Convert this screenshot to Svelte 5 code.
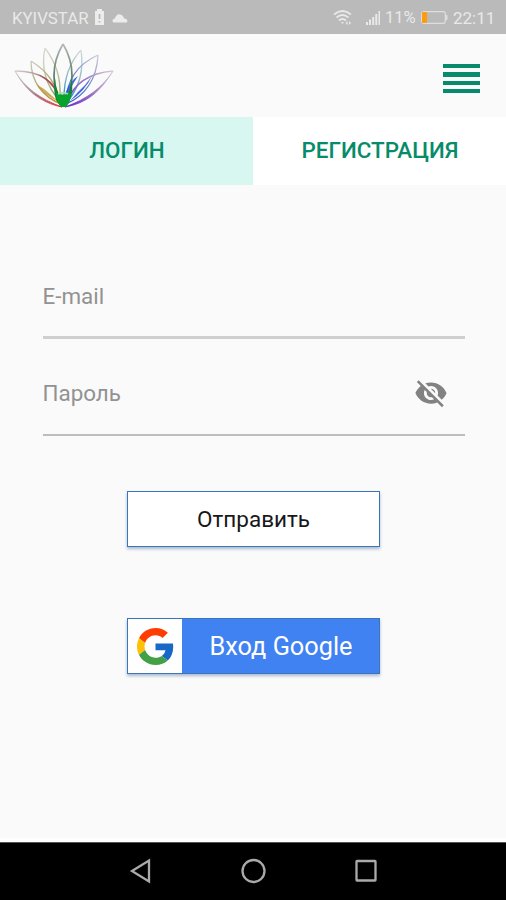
<script>
  let email = $state('');
  let password = $state('');
</script>

<div class="screen">
  <div class="status">
    <span class="carrier">KYIVSTAR</span>
    <svg class="sim" width="11" height="17" viewBox="0 0 11 17">
      <path d="M3 2V0h5v2h2v14H1V2Z" fill="#ececec" />
      <path d="M5.500 5v5M5.500 12v1.500" stroke="#bababa" stroke-width="1.800" />
    </svg>
    <svg class="cloud" width="16" height="10" viewBox="0 0 16 10">
      <path d="M2 9.500C-.5 9.500 .4 5.500 3 5.600C3.500 2 7 0 10 2.200C11.300 3.200 11.800 4.700 12 5.400C15.500 5.500 16.300 8.500 14.500 9.500Z" fill="#ececec" />
    </svg>
    <span class="gap"></span>
    <svg class="wifi" width="20" height="17" viewBox="0 0 20 17" fill="none" stroke="#e9e9e9" stroke-width="1.700">
      <path d="M1 5.500Q9.500-1.500 18 5.500M3.500 8.500Q9.500 3.500 15.500 8.500M6 11.500Q9.500 8.500 13 11.500" />
      <path d="M8 13h3l-1.500 2zM12.500 14l2-2v4zM16 12v4l2-2z" fill="#e9e9e9" stroke="none" />
    </svg>
    <svg class="signal" width="15" height="14" viewBox="0 0 15 14" fill="#e9e9e9">
      <path d="M0 11h2v3H0zM3 8.500h2V14H3zM6.200 6h2v8h-2zM9.300 3h2v11h-2zM12.500 0h1.500v14h-1.500z" />
    </svg>
    <span class="percent">11%</span>
    <svg class="battery" width="28" height="13" viewBox="0 0 28 13">
      <rect x=".7" y=".7" width="23.600" height="11.600" rx="2" fill="none" stroke="#dedede" stroke-width="1.200" />
      <path d="M25.500 4v5" stroke="#dedede" stroke-width="2" />
      <rect x="1" y="1" width="5" height="11" rx="1" fill="#ff9c0b" />
    </svg>
    <span class="clock">22:11</span>
  </div>

  <header>
    <svg class="logo" width="102" height="68" viewBox="0 0 102 68" fill="none" stroke-width="1.300">
      <defs>
        <linearGradient id="rose" gradientUnits="userSpaceOnUse" x1="2" y1="29" x2="48" y2="62">
          <stop offset="0" stop-color="#d2cfcf" /><stop offset=".5" stop-color="#a5848a" /><stop offset="1" stop-color="#e02f3c" />
        </linearGradient>
        <linearGradient id="gold" gradientUnits="userSpaceOnUse" x1="18" y1="10" x2="46" y2="60">
          <stop offset="0" stop-color="#d8d9cf" /><stop offset=".5" stop-color="#b0aa80" /><stop offset="1" stop-color="#c98a20" />
        </linearGradient>
        <linearGradient id="olive" gradientUnits="userSpaceOnUse" x1="32" y1="6" x2="48" y2="58">
          <stop offset="0" stop-color="#dadbd6" /><stop offset=".5" stop-color="#c0bf9c" /><stop offset="1" stop-color="#7ba238" />
        </linearGradient>
        <linearGradient id="teal" gradientUnits="userSpaceOnUse" x1="68" y1="8" x2="52" y2="60">
          <stop offset="0" stop-color="#d5dada" /><stop offset=".5" stop-color="#8ebac8" /><stop offset="1" stop-color="#1583c4" />
        </linearGradient>
        <linearGradient id="blue" gradientUnits="userSpaceOnUse" x1="85" y1="13" x2="52" y2="62">
          <stop offset="0" stop-color="#cccfda" /><stop offset=".5" stop-color="#7385c4" /><stop offset="1" stop-color="#164ae0" />
        </linearGradient>
        <linearGradient id="violet" gradientUnits="userSpaceOnUse" x1="100" y1="29" x2="52" y2="62">
          <stop offset="0" stop-color="#d3ccd8" /><stop offset=".5" stop-color="#9a74c0" /><stop offset="1" stop-color="#6d20d4" />
        </linearGradient>
        <linearGradient id="green" gradientUnits="userSpaceOnUse" x1="50" y1="2" x2="50" y2="63">
          <stop offset="0" stop-color="#b5bab5" /><stop offset=".5" stop-color="#5d7d6c" /><stop offset="1" stop-color="#079b2f" />
        </linearGradient>
      </defs>
      <path stroke="url(#olive)" d="M32 6C28 24 32 44 48 60M32 6C43 21 48 35 47 56" />
      <path stroke="url(#teal)" d="M68 8C57 20 51 36 51 56M68 8C71 28 67 45 54 60" />
      <path stroke="url(#gold)" d="M18 19C18 40 30 55 48 62M18 19C34 29 43 41 47 60" />
      <path stroke="url(#blue)" d="M85 13C63 23 55 38 52 60M85 13C84 37 72 54 53 62" />
      <path stroke="url(#rose)" d="M2 29C24 29 43 37 48 61" />
      <path stroke="url(#violet)" d="M100 29C76 31 61 41 54 60" />
      <path fill="url(#rose)" d="M2 29C12 48 28 61 49 65C27 57 12 46 2 29Z" stroke="url(#rose)" stroke-width=".8" />
      <path fill="url(#violet)" d="M100 29C87 50 74 61 52 65C74 57 89 46 100 29Z" stroke="url(#violet)" stroke-width=".8" />
      <path fill="#a53f43" fill-opacity=".75" d="M24 32Q40 37 45 53Q37 39 24 32Z" />
      <path fill="#bd8d25" fill-opacity=".75" d="M23 42Q31 53 46 60Q37 52 31 47Z" />
      <path fill="#214fd8" fill-opacity=".85" d="M79 34Q72 49 57 59L65 50Q73 43 79 34ZM53 50Q58 38 65 34Q57 46 53 57Z" />
      <path stroke="url(#green)" stroke-width="1.700" d="M50 2C38 22 38 46 50 63C62 46 62 22 50 2" />
      <path d="M42 36Q43 48 47 54H54Q58 47 58 36Q61 47 57 58L52 65H48L43 58Q40 48 42 36Z" fill="#14813d" />
      <path d="M43 51Q50 54 58 51Q58 60 53 65H48Q43 60 43 51Z" fill="#07a32b" />
      <path d="M45 52Q50 49.500 55 52" stroke="#a2dcb1" stroke-width="1.500" />
    </svg>
    <div class="menu"><i></i><i></i><i></i><i></i></div>
  </header>

  <nav class="tabs">
    <div class="tab active"><span>ЛОГИН</span></div>
    <div class="tab"><span>РЕГИСТРАЦИЯ</span></div>
  </nav>

  <main>
    <label class="field"><input type="text" placeholder="E-mail" bind:value={email} /></label>
    <label class="field second">
      <input type="password" placeholder="Пароль" bind:value={password} />
      <svg class="eye" width="34" height="34" viewBox="0 0 24 24" fill="#828282">
        <path d="M12 7c2.760 0 5 2.240 5 5 0 .65-.13 1.260-.36 1.830l2.920 2.920c1.510-1.260 2.700-2.890 3.430-4.750-1.730-4.390-6-7.500-11-7.500-1.400 0-2.740.25-3.980.7l2.160 2.160C10.740 7.130 11.350 7 12 7zM2 4.270l2.280 2.280.46.46C3.080 8.300 1.780 10.020 1 12c1.730 4.390 6 7.500 11 7.500 1.550 0 3.030-.3 4.380-.84l.42.42L19.730 22 21 20.730 3.270 3 2 4.270zM7.530 9.800l1.550 1.550c-.05.21-.08.43-.08.65 0 1.660 1.340 3 3 3 .22 0 .44-.03.65-.08l1.550 1.550c-.67.33-1.410.53-2.200.53-2.760 0-5-2.240-5-5 0-.79.2-1.530.53-2.200zm4.310-.78l3.150 3.150.02-.16c0-1.660-1.340-3-3-3l-.17.01z" />
      </svg>
    </label>

    <button class="send"><span>Отправить</span></button>
    <button class="google">
      <span class="mark">
        <svg width="37" height="37" viewBox="0 0 48 48">
          <path fill="#ff3d00" d="M24 9.500c3.540 0 6.710 1.220 9.210 3.600l6.850-6.850C35.900 2.380 30.470 0 24 0 14.620 0 6.510 5.380 2.560 13.220l7.980 6.190C12.430 13.720 17.740 9.500 24 9.500z" />
          <path fill="#1769c7" d="M46.980 24.550c0-1.570-.15-3.090-.38-4.550H24v9.020h12.940c-.58 2.960-2.260 5.480-4.780 7.180l7.730 6c4.510-4.180 7.090-10.360 7.090-17.650z" />
          <path fill="#ffc107" d="M10.530 28.590c-.48-1.450-.76-2.990-.76-4.590s.27-3.140.76-4.590l-7.980-6.190C.92 16.460 0 20.120 0 24c0 3.880.92 7.540 2.560 10.780l7.970-6.190z" />
          <path fill="#43a047" d="M24 48c6.480 0 11.930-2.130 15.890-5.810l-7.730-6c-2.150 1.450-4.920 2.300-8.160 2.300-6.260 0-11.570-4.220-13.470-9.910l-7.980 6.190C6.510 42.620 14.620 48 24 48z" />
        </svg>
      </span>
      <span class="caption">Вход Google</span>
    </button>
  </main>

  <footer>
    <svg width="24" height="26" viewBox="0 0 24 26"><path d="M3 13 20 2.500v21Z" /></svg>
    <svg width="26" height="26" viewBox="0 0 26 26"><circle cx="12.500" cy="13" r="11" /></svg>
    <svg width="24" height="26" viewBox="0 0 24 26"><rect x="2.500" y="3" width="19" height="19.500" rx=".5" /></svg>
  </footer>
</div>

<style>
  .screen {
    width: 506px;
    height: 900px;
    display: flex;
    flex-direction: column;
    background: #fafafa;
    font-family: Roboto, "Noto Sans", sans-serif;
    overflow: hidden;
  }
  .status {
    box-sizing: border-box;
    height: 34px;
    flex: none;
    display: flex;
    align-items: center;
    padding: 1px 10px 0 12px;
    background: #bababa;
    color: #e9e9e9;
    font-size: 17px;
    line-height: 20px;
  }
  .carrier { width: 82px; font-size: 16.800px; white-space: nowrap; }
  .cloud { margin-left: 7px; }
  .gap { flex: 1; }
  .wifi { margin-right: 1px; }
  .signal { margin-left: 12px; }
  .percent { margin-left: 4px; width: 33px; font-size: 16.500px; }
  .battery { margin-left: 3px; }
  .clock { margin-left: 4px; width: 43px; }
  header {
    box-sizing: border-box;
    height: 83px;
    flex: none;
    display: flex;
    justify-content: space-between;
    align-items: flex-start;
    padding: 8px 26px 0 13px;
  }
  .menu { display: grid; gap: 4px; padding-top: 22px; }
  .menu i { display: block; width: 37.500px; height: 4.300px; background: #078b6c; }
  .tabs { display: flex; height: 68px; flex: none; }
  .tab {
    flex: 1;
    box-sizing: border-box;
    padding: 18.500px 0 0 1px;
    background: #fff;
    color: #078c6a;
    text-align: center;
    font-size: 22.400px;
    font-weight: 500;
    line-height: 28px;
  }
  .active { background: #d8f7f1; }
  main {
    flex: 1;
    display: flex;
    flex-direction: column;
    align-items: center;
    border-bottom: 4px solid #fff;
    padding: 85px 0 0 1px;
  }
  .field {
    box-sizing: border-box;
    width: 422px;
    height: 69px;
    flex: none;
    display: flex;
    padding-top: 11px;
    border-bottom: 3px solid #cfcfcf;
  }
  .second { margin-top: 28px; border-bottom: 2px solid #bdbdbd; }
  input {
    flex: 1;
    min-width: 0;
    height: 30px;
    padding: 0;
    border: 0;
    outline: 0;
    background: none;
    font: 400 22.400px/30px Roboto, "Noto Sans", sans-serif;
  }
  input::placeholder { color: #929292; opacity: 1; }
  .eye { margin: -2px 17px 0 0; }
  button {
    box-sizing: border-box;
    width: 253px;
    height: 56px;
    flex: none;
    padding: 0;
    border: 1.500px solid #3c75b9;
    box-shadow: 0 2px 3px #a9b8d0;
    font: 400 22.500px/28px Roboto, "Noto Sans", sans-serif;
  }
  .send { margin-top: 55px; background: #fff; color: #181818; }
  .google {
    display: flex;
    align-items: center;
    margin-top: 71px;
    background: #4182f2;
    color: #fff;
    font-size: 25.300px;
  }
  .mark {
    width: 54px;
    height: 100%;
    display: flex;
    align-items: center;
    justify-content: center;
    background: #fff;
  }
  .caption { flex: 1; text-align: center; padding: 2px 0 0 1px; }
  footer {
    box-sizing: border-box;
    height: 58px;
    flex: none;
    display: flex;
    justify-content: space-between;
    align-items: center;
    padding: 0 128px 1px 129px;
    background: #000;
    border-top: 1px solid #555;
  }
  footer svg { fill: none; stroke: #aaa; stroke-width: 2.300; }
</style>
